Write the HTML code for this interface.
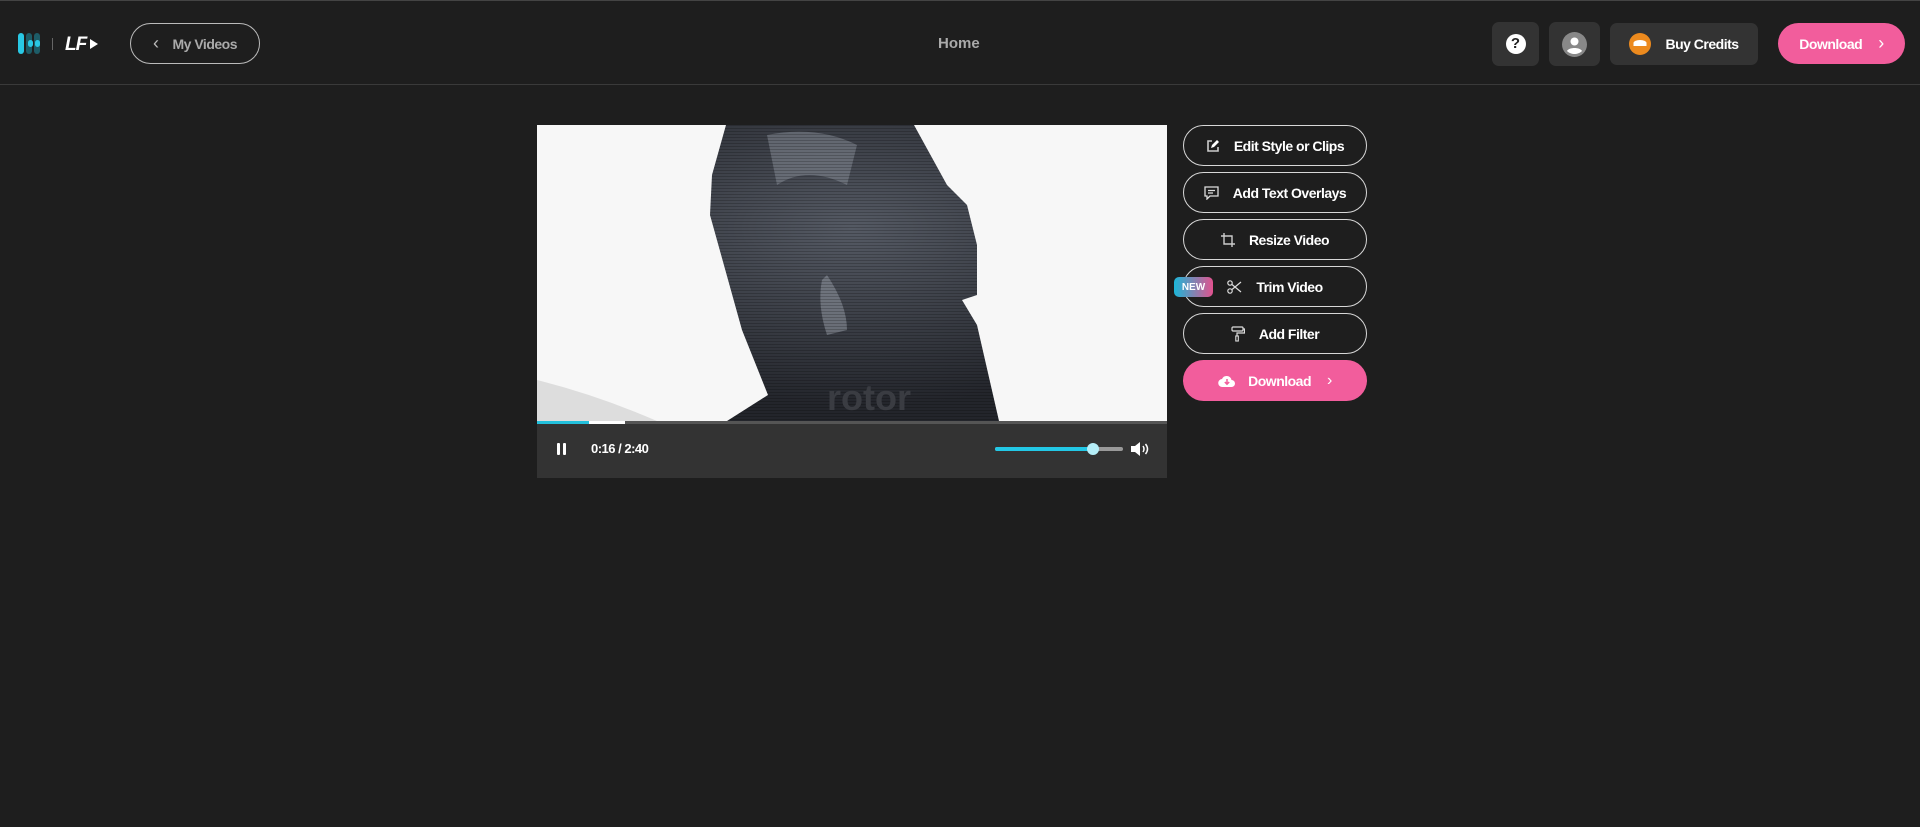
<!DOCTYPE html>
<html><head><meta charset="utf-8"><style>
*{box-sizing:border-box;margin:0;padding:0}
body{width:1920px;height:827px;background:#1e1e1e;font-family:"Liberation Sans",sans-serif;color:#fff;position:relative;overflow:hidden}
.hdr{position:absolute;left:0;top:0;width:1920px;height:85px;border-bottom:1px solid #3a3a3a;border-top:1px solid #444}
.abs{position:absolute}
.pill{position:absolute;border:1.5px solid #d8d8d8;border-radius:22px;display:flex;align-items:center;justify-content:center;font-weight:bold;font-size:14px;letter-spacing:-0.5px}
.sq{position:absolute;background:#333;border-radius:7px;display:flex;align-items:center;justify-content:center}
.side{left:1183px;width:184px;height:41px}
</style></head><body>
<div class="hdr">
 <div class="abs" style="left:18px;top:32px;width:6px;height:21px;border-radius:3px;background:#29c8e4"></div>
 <div class="abs" style="left:26px;top:32px;width:6px;height:21px;border-radius:3px;background:#1d5c67"></div>
 <div class="abs" style="left:28px;top:39px;width:5px;height:7px;border-radius:3px;background:#29c8e4"></div>
 <div class="abs" style="left:34px;top:32px;width:6px;height:21px;border-radius:3px;background:#1d5c67"></div>
 <div class="abs" style="left:35px;top:39px;width:5px;height:7px;border-radius:3px;background:#29c8e4"></div>
 <div class="abs" style="left:52px;top:37px;width:1px;height:12px;background:#666"></div>
 <div class="abs" style="left:65px;top:33px;font-weight:bold;font-style:italic;font-size:19px;letter-spacing:-1px">LF</div>
 <div class="abs" style="left:90px;top:38px;width:0;height:0;border-left:8px solid #fff;border-top:5px solid transparent;border-bottom:5px solid transparent"></div>
 <div class="pill" style="left:130px;top:22px;width:130px;height:41px;border-color:#bbb;color:#aaa;font-size:14px"><span style="font-size:18px;margin-right:14px;font-weight:normal;color:#bbb">&#8249;</span>My Videos</div>
 <div class="abs" style="left:938px;top:34px;font-size:15px;font-weight:bold;color:#aaa">Home</div>
 <div class="sq" style="left:1492px;top:21px;width:47px;height:44px"><div style="width:20px;height:20px;border-radius:50%;background:#fff;color:#222;font-size:15px;font-weight:bold;text-align:center;line-height:20px">?</div></div>
 <div class="sq" style="left:1549px;top:21px;width:51px;height:44px"><svg width="25" height="25" viewBox="0 0 25 25"><circle cx="12.5" cy="12.5" r="12.5" fill="#888"/><circle cx="12.5" cy="9.5" r="4" fill="#fff"/><path d="M5 19c2-4 13-4 15 0c-2 2-5 3-7.5 3s-5.5-1-7.5-3z" fill="#fff"/></svg></div>
 <div class="sq" style="left:1610px;top:22px;width:148px;height:42px;font-weight:bold;font-size:14px;letter-spacing:-0.5px"><svg width="22" height="22" viewBox="0 0 22 22" style="margin-right:14px"><circle cx="11" cy="11" r="11" fill="#ec8a1e"/><ellipse cx="11" cy="10" rx="6.5" ry="3" fill="#fff"/><rect x="4.5" y="10" width="13" height="3" fill="#fff"/></svg>Buy Credits</div>
 <div class="pill" style="left:1778px;top:22px;width:127px;height:41px;background:#f25d9c;border:none;font-size:14px">Download<span style="margin-left:16px;font-weight:normal;font-size:18px">&#8250;</span></div>
</div>

<div class="abs" style="left:537px;top:125px;width:630px;height:353px;background:#333;overflow:hidden">
 <svg width="630" height="296" viewBox="0 0 630 296" style="display:block">
  <defs>
   <pattern id="sl" width="4" height="3" patternUnits="userSpaceOnUse"><rect width="4" height="1" fill="#000" opacity=".5"/></pattern>
   <radialGradient id="g" cx="0.5" cy="0.35" r="0.6"><stop offset="0" stop-color="#555a64"/><stop offset="1" stop-color="#23252b"/></radialGradient>
   <clipPath id="hc"><path d="M189 0 L377 0 L410 60 L430 80 L440 120 L440 170 L425 175 L440 200 L462 296 L190 296 L231 270 L205 205 L173 90 L175 50z"/></clipPath>
  </defs>
  <rect width="630" height="296" fill="#f7f7f7"/>
  <path d="M0 255 Q60 270 120 296 L0 296z" fill="#ccc" opacity=".6"/>
  <g clip-path="url(#hc)">
   <rect width="630" height="296" fill="url(#g)"/>
   <path d="M230 10 Q280 0 320 20 L310 60 Q270 40 240 60z" fill="#8a909a" opacity=".5"/>
   <path d="M290 150 Q310 180 310 205 L290 210 Q280 180 285 155z" fill="#9aa0aa" opacity=".5"/>
   <rect width="630" height="296" fill="url(#sl)" opacity=".4"/>
  </g>
  <text x="290" y="285" font-family="Liberation Sans" font-weight="bold" font-size="36" fill="#3a3c42">rotor</text>
 </svg>
 <div class="abs" style="left:0;top:296px;width:630px;height:3px;background:#555"></div>
 <div class="abs" style="left:0;top:296px;width:88px;height:3px;background:#fff"></div>
 <div class="abs" style="left:0;top:296px;width:52px;height:3px;background:#23c0dc"></div>
 <div class="abs" style="left:20px;top:318px;width:3px;height:12px;background:#fff;border-radius:1px"></div>
 <div class="abs" style="left:26px;top:318px;width:3px;height:12px;background:#fff;border-radius:1px"></div>
 <div class="abs" style="left:54px;top:316px;font-size:13px;font-weight:bold;letter-spacing:-0.5px">0:16 / 2:40</div>
 <div class="abs" style="left:458px;top:322px;width:128px;height:4px;background:#999;border-radius:2px"></div>
 <div class="abs" style="left:458px;top:322px;width:98px;height:4px;background:#23c8e6;border-radius:2px"></div>
 <div class="abs" style="left:550px;top:318px;width:12px;height:12px;background:#b5eef8;border-radius:50%"></div>
 <svg class="abs" style="left:593px;top:316px" width="20" height="16" viewBox="0 0 20 16"><path d="M1 5h4l5-4v14l-5-4H1z" fill="#fff"/><path d="M13 5q2 3 0 6M15.5 3q4 5 0 10" stroke="#fff" stroke-width="1.5" fill="none"/></svg>
</div>

<div class="pill side" style="top:125px"><svg width="14" height="14" viewBox="0 0 14 14" style="margin-right:14px"><path d="M6 2H2v10h10V8" stroke="#ccc" stroke-width="1.6" fill="none"/><path d="M5 9l1-3 5-5 2 2-5 5z" fill="#fff"/></svg>Edit Style or Clips</div>
<div class="pill side" style="top:172px"><svg width="15" height="14" viewBox="0 0 15 14" style="margin-right:14px"><path d="M1 1h13v9H6l-3 3v-3H1z" stroke="#ddd" stroke-width="1.3" fill="none"/><path d="M4 4.5h7M4 7h5" stroke="#ddd" stroke-width="1.2"/></svg>Add Text Overlays</div>
<div class="pill side" style="top:219px"><svg width="14" height="14" viewBox="0 0 14 14" style="margin-right:14px"><path d="M3 0v11h11M0 3h11v11" stroke="#ccc" stroke-width="1.4" fill="none"/></svg>Resize Video</div>
<div class="pill side" style="top:266px"><svg width="15" height="14" viewBox="0 0 15 14" style="margin-right:14px"><circle cx="3" cy="3" r="2.2" stroke="#ddd" stroke-width="1.2" fill="none"/><circle cx="3" cy="11" r="2.2" stroke="#ddd" stroke-width="1.2" fill="none"/><path d="M5 4.5L14 12M5 9.5L14 2" stroke="#ddd" stroke-width="1.2"/></svg>Trim Video</div>
<div class="abs" style="left:1174px;top:277px;width:39px;height:20px;border-radius:5px;background:linear-gradient(90deg,#1cb6d8,#e2528e);font-size:10px;font-weight:bold;display:flex;align-items:center;justify-content:center">NEW</div>
<div class="pill side" style="top:313px"><svg width="14" height="16" viewBox="0 0 14 16" style="margin-right:14px"><rect x="1" y="1" width="11" height="4" rx="1" stroke="#ddd" stroke-width="1.2" fill="none"/><path d="M12 3h1.5v4H6v3" stroke="#ddd" stroke-width="1.2" fill="none"/><rect x="4.8" y="10" width="2.5" height="5" stroke="#ddd" stroke-width="1.1" fill="none"/></svg>Add Filter</div>
<div class="pill side" style="top:360px;background:#f25d9c;border:none"><svg width="18" height="14" viewBox="0 0 18 14" style="margin-right:12px"><path d="M4.5 13a4 4 0 0 1-.5-8a5 5 0 0 1 9.5 1a3.5 3.5 0 0 1 0 7z" fill="#fff"/><path d="M9 5v5M6.8 8l2.2 2.2L11.2 8" stroke="#f25d9c" stroke-width="1.5" fill="none"/></svg>Download<span style="margin-left:16px;font-weight:normal;font-size:16px">&#8250;</span></div>
</body></html>
